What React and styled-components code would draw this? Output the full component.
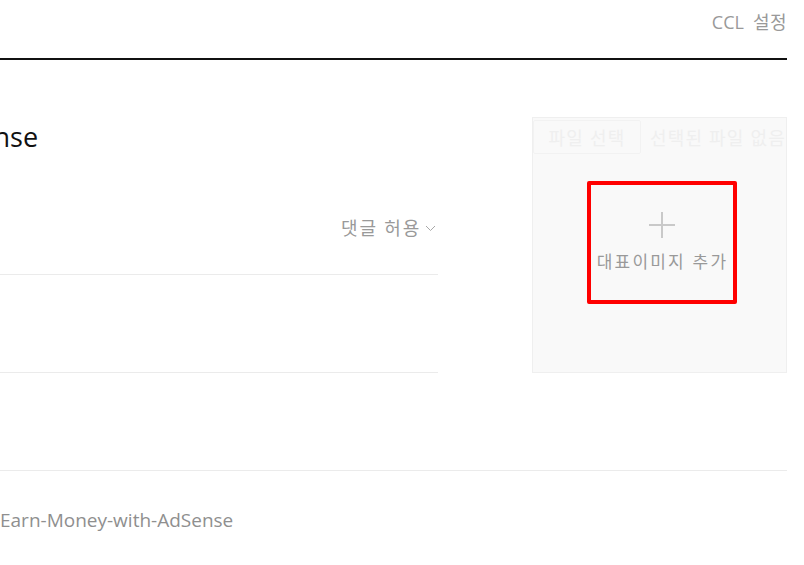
import React from 'react'
import styled, { createGlobalStyle } from 'styled-components'

const GlobalStyle = createGlobalStyle`
  html, body {
    margin: 0;
    padding: 0;
    background: #fff;
    overflow: hidden;
  }
  body {
    font-family: 'Open Sans', 'Noto Sans CJK KR', sans-serif;
  }
`

const Page = styled.div`
  width: 787px;
  height: 565px;
`

const TopBar = styled.div`
  height: 58px;
  display: flex;
  justify-content: flex-end;
  align-items: flex-start;
  border-bottom: 2px solid #111;
`

const TopLink = styled.span`
  margin-top: 9px;
  font-size: 18px;
  line-height: 26px;
  color: #999;
`

const Ko = styled.span`
  margin-left: 9px;
  letter-spacing: 0.5px;
`

const Editor = styled.div`
  display: flex;
  gap: 94px;
  margin-top: 57px;
`

const LeftCol = styled.div`
  width: 438px;
`

const Title = styled.h1`
  margin: 0;
  height: 40px;
  font-size: 27px;
  line-height: 40px;
  font-weight: 400;
  color: #111;
  white-space: nowrap;
  text-indent: -70px;
`

const OptionRow = styled.div`
  display: flex;
  justify-content: flex-end;
  align-items: center;
  gap: 4px;
  padding: 59px 2px 34px 0;
  height: 24px;
  border-bottom: 1px solid #ebebeb;
  font-size: 18px;
  line-height: 24px;
  letter-spacing: 1.8px;
  color: #999;
`

const EmptyRow = styled.div`
  height: 97px;
  border-bottom: 1px solid #ebebeb;
`

const ImagePanel = styled.div`
  position: relative;
  box-sizing: border-box;
  width: 255px;
  height: 256px;
  background: #f9f9f9;
  border: 1px solid #efefef;
  display: flex;
  align-items: center;
  justify-content: center;
  padding: 0 0 6px 4px;
`

const FileInput = styled.div`
  position: absolute;
  top: 2px;
  left: 0;
  right: 0;
  display: flex;
  align-items: center;
  gap: 9px;
  font-size: 18px;
  letter-spacing: 1.2px;
  color: #efefef;
  white-space: nowrap;
  overflow: hidden;
`

const FileButton = styled.span`
  box-sizing: border-box;
  width: 108px;
  height: 34px;
  display: flex;
  align-items: center;
  justify-content: center;
  border: 1px solid #f2f2f2;
  border-radius: 2px;
`

const Highlight = styled.div`
  box-sizing: border-box;
  width: 150px;
  height: 123px;
  border: 4.5px solid #ff0000;
  border-radius: 2px;
  display: flex;
  flex-direction: column;
  align-items: center;
  justify-content: center;
  gap: 11px;
`

const AddLabel = styled.span`
  font-size: 17px;
  line-height: 24px;
  letter-spacing: 2.2px;
  margin-right: -2px;
  color: #999;
  white-space: nowrap;
`

const Divider = styled.div`
  margin-top: 97px;
  border-top: 1px solid #ebebeb;
`

const Permalink = styled.div`
  margin-top: 37px;
  font-size: 19px;
  line-height: 24px;
  color: #8f8f8f;
`

const Plus = () => (
  <svg width="28" height="28" viewBox="0 0 28 28">
    <path d="M14 1v26M1 14h26" stroke="#c9c9c9" strokeWidth="2" fill="none" />
  </svg>
)

const Chevron = () => (
  <svg width="11" height="7" viewBox="0 0 11 7">
    <path d="M1 1l4.5 4.5L10 1" stroke="#a8a8a8" strokeWidth="1" fill="none" />
  </svg>
)

const App = () => {
  return (
    <Page>
      <GlobalStyle />
      <TopBar>
        <TopLink>
          CCL<Ko>설정</Ko>
        </TopLink>
      </TopBar>
      <Editor>
        <LeftCol>
          <Title>AdSense</Title>
          <OptionRow>
            댓글 허용
            <Chevron />
          </OptionRow>
          <EmptyRow />
        </LeftCol>
        <ImagePanel>
          <FileInput>
            <FileButton>파일 선택</FileButton>
            선택된 파일 없음
          </FileInput>
          <Highlight>
            <Plus />
            <AddLabel>대표이미지 추가</AddLabel>
          </Highlight>
        </ImagePanel>
      </Editor>
      <Divider />
      <Permalink>Earn-Money-with-AdSense</Permalink>
    </Page>
  )
}

export default App
